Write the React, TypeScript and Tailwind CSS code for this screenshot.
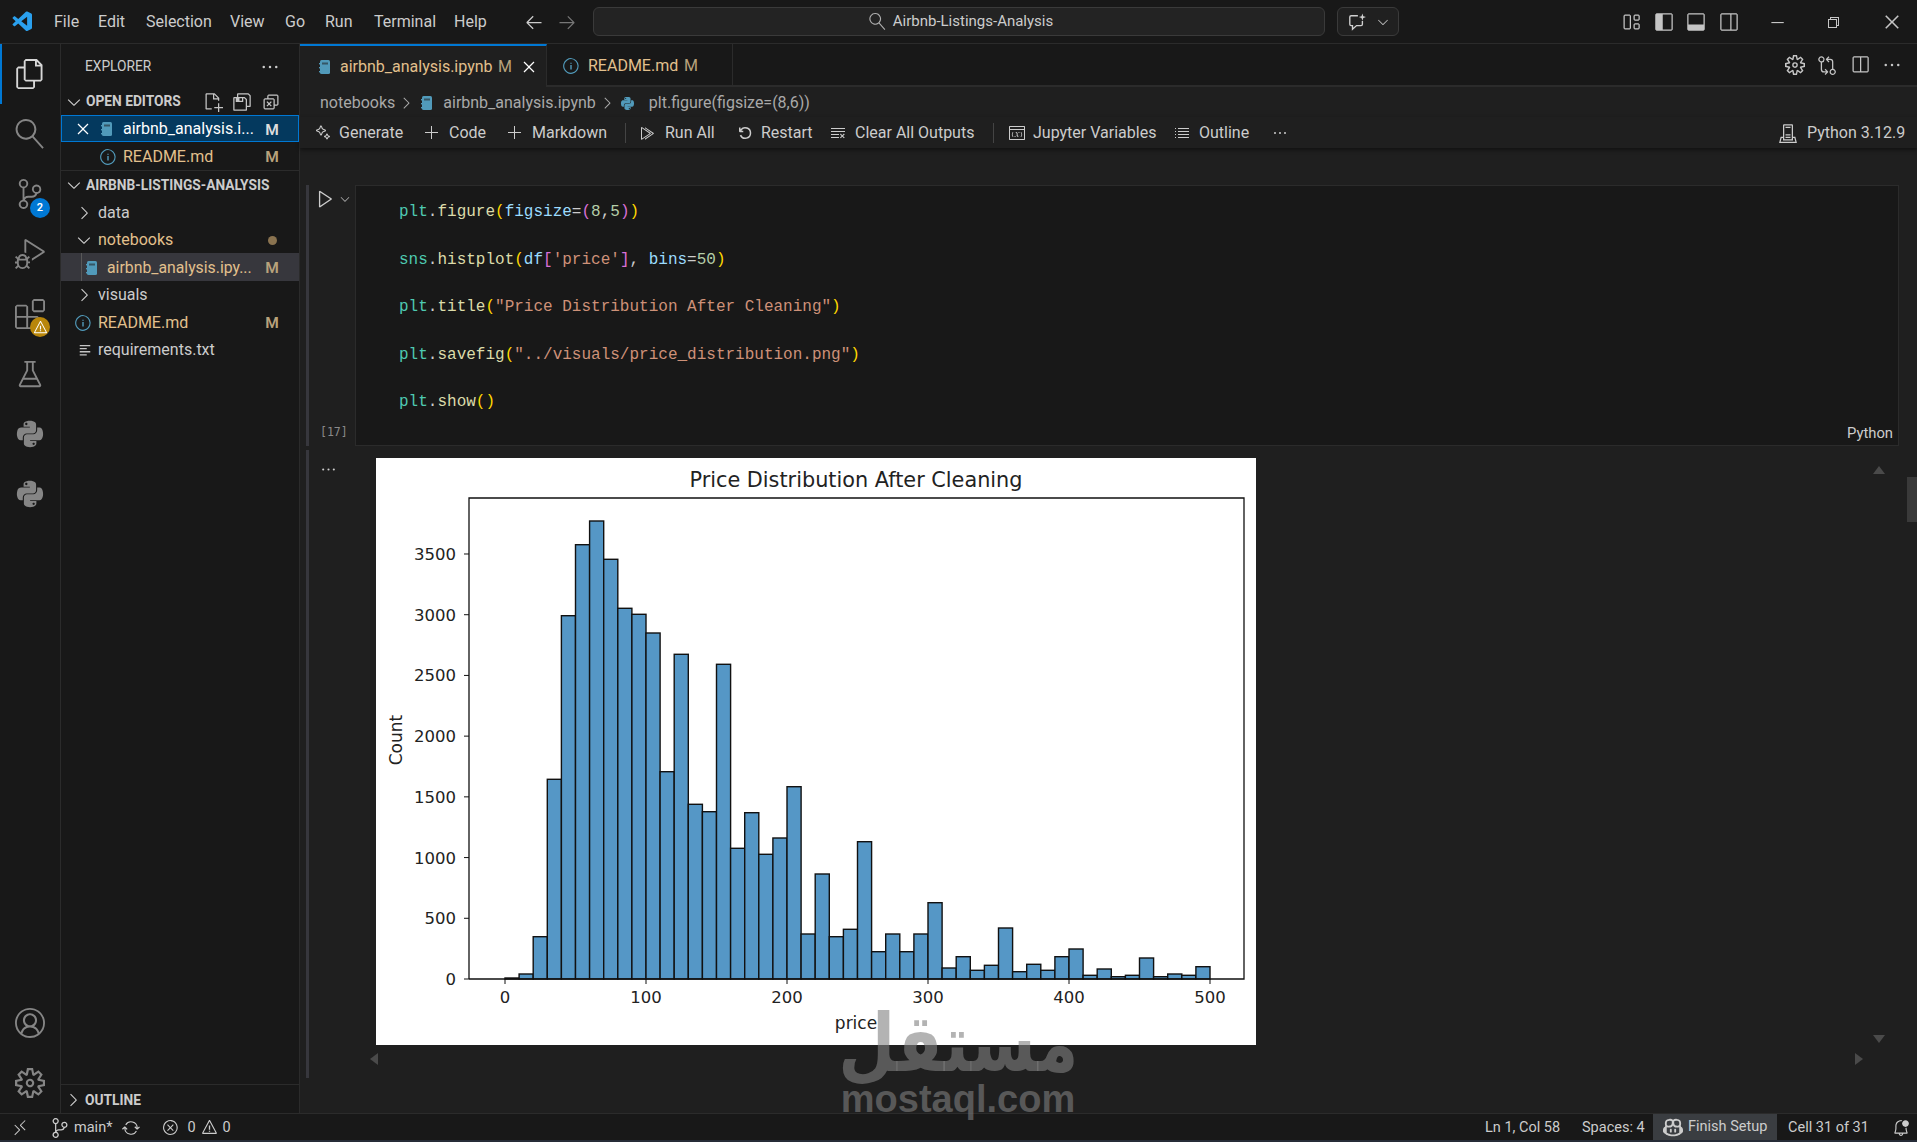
import React from "react";
import {
  VscVscode, VscArrowLeft, VscArrowRight, VscSearch, VscChevronDown, VscChevronRight, VscLayout, VscLayoutSidebarLeft,
  VscLayoutPanel, VscLayoutSidebarRightOff, VscChromeMinimize, VscChromeRestore, VscChromeClose, VscFiles, VscSourceControl,
  VscDebugAlt, VscExtensions, VscBeaker, VscAccount, VscSettingsGear, VscEllipsis, VscNewFile, VscSaveAll, VscCloseAll, VscClose,
  VscInfo, VscAdd, VscRunAll, VscDebugRestart, VscClearAll, VscVariableGroup, VscListUnordered, VscServerEnvironment,
  VscSplitHorizontal, VscPlay, VscRemote, VscSync, VscError, VscWarning, VscBellDot, VscSparkle, VscCopilot,
  VscGitCompare,
} from "react-icons/vsc";
import { FaPython } from "react-icons/fa";

const Nb = ({ className = "" }: { className?: string }) => (
  <svg viewBox="0 0 16 16" width="16" height="16" className={className}>
    <rect x="3" y="1" width="10" height="14" rx="1.5" fill="#519aba" />
    <rect x="5" y="3.5" width="6" height="2" fill="#1f1f1f" opacity="0.55" />
    <rect x="2" y="4" width="1.4" height="1.4" fill="#519aba" />
    <rect x="2" y="8" width="1.4" height="1.4" fill="#519aba" />
    <rect x="2" y="12" width="1.4" height="1.4" fill="#519aba" />
  </svg>
);

const ChatSpark = () => (
  <svg viewBox="0 0 24 24" width="24" height="24" fill="none" stroke="#d0d0d0" strokeWidth="1.5">
    <path d="M13 5H5.5A1.5 1.5 0 0 0 4 6.5v8A1.5 1.5 0 0 0 5.5 16H7v4l4.5-4h5a1.5 1.5 0 0 0 1.5-1.5V11" />
    <path d="M18 2.5l1 3 3 1-3 1-1 3-1-3-3-1 3-1z" fill="#d0d0d0" stroke="none" />
  </svg>
);

const Activity = ({ children, active }: { children: React.ReactNode; active?: boolean }) => (
  <div className={`relative h-[60px] w-[60px] flex items-center justify-center ${active ? "text-[#d7d7d7]" : "text-[#858585]"}`}>
    {active && <div className="absolute left-0 top-0 h-full w-[2px] bg-[#0078d4]" />}
    {children}
  </div>
);

const Row = ({ className = "", children }: { className?: string; children: React.ReactNode }) => (
  <div className={`relative h-[27.5px] pt-[2px] flex items-center whitespace-nowrap ${className}`}>{children}</div>
);

const M = ({ className = "text-[#b8a27c]" }: { className?: string }) => (
  <span className={`absolute left-[203px] top-[4px] w-[16px] text-center text-[15.5px] font-semibold ${className}`}>M</span>
);

// bar tops read from the reference, in page pixels
const barTops = [
  978, 974, 936.7, 779.3, 615.7, 544.7, 521, 559.3, 608.3, 614.3, 633, 771.7, 654.3, 804.3, 811.7, 664.3, 848.3, 812.7, 854.3, 838,
  786.7, 934, 874, 936.7, 929.3, 841.7, 951.7, 934, 951.7, 934, 902.7, 968, 956.7, 970.3, 965.3, 928, 971.7, 964.3, 970.3, 956.7,
  949, 975.3, 969, 976.7, 975.3, 958, 976.7, 974, 975.3, 966.7,
];

const Chart = () => {
  const x0 = 129;
  const base = 521;
  return (
    <svg width="880" height="587" viewBox="0 0 880 587" className="block bg-white" style={{ fontFamily: '"DejaVu Sans", sans-serif' }}>
      {barTops.map((t, i) => (
        <rect key={i} x={x0 + i * 14.1} y={t - 458} width={14.1} height={base - (t - 458)} fill="#5597c6" stroke="#111" strokeWidth="1.4" />
      ))}
      <path d="M93 521V40H868V521H93" fill="none" stroke="#111" strokeWidth="1.3" />
      {[0, 500, 1000, 1500, 2000, 2500, 3000, 3500].map((v) => {
        const y = base - v * 0.12143;
        return (
          <g key={v}>
            <line x1="88" x2="93" y1={y} y2={y} stroke="#111" strokeWidth="1" />
            <text x="80" y={y + 6} fontSize="16.5" textAnchor="end" fill="#222">{v}</text>
          </g>
        );
      })}
      {[0, 100, 200, 300, 400, 500].map((v) => {
        const x = x0 + v * 1.41;
        return (
          <g key={v}>
            <line x1={x} x2={x} y1="521" y2="526" stroke="#111" strokeWidth="1" />
            <text x={x} y="545" fontSize="16.5" textAnchor="middle" fill="#222">{v}</text>
          </g>
        );
      })}
      <text x="480" y="29" fontSize="20.8" textAnchor="middle" fill="#222">Price Distribution After Cleaning</text>
      <text x="480" y="571" fontSize="17" textAnchor="middle" fill="#222">price</text>
      <text x="26" y="282" fontSize="17" textAnchor="middle" fill="#222" transform="rotate(-90 26 282)">Count</text>
    </svg>
  );
};

const Tool = ({ icon, label, iconCls, textCls }: { icon: React.ReactNode; label: string; iconCls: string; textCls: string }) => (
  <>
    <span className={`flex w-[16px] justify-center ${iconCls}`}>{icon}</span>
    <span className={`whitespace-nowrap ${textCls}`}>{label}</span>
  </>
);

const c = {
  t: "text-[#4ec9b0]",
  d: "text-[#cccccc]",
  f: "text-[#dcdcaa]",
  y: "text-[#ffd700]",
  v: "text-[#9cdcfe]",
  p: "text-[#da70d6]",
  n: "text-[#b5cea8]",
  s: "text-[#ce9178]",
};

const S = ({ k, children }: { k: keyof typeof c; children: React.ReactNode }) => <span className={c[k]}>{children}</span>;

const Line = ({ children }: { children: React.ReactNode }) => <div className="h-[47.5px] leading-[47.5px] whitespace-pre">{children}</div>;

export default function App() {
  return (
    <div
      className="relative w-[1917px] h-[1142px] overflow-hidden bg-[#181818] text-[#cccccc] flex flex-col"
      style={{ fontFamily: 'Roboto, "Noto Sans", sans-serif' }}
    >
      {/* Title bar */}
      <header className="h-[44px] shrink-0 border-b border-[#2b2b2b] flex items-center text-[16px]">
        <VscVscode size={24} className="ml-[11px] text-[#2aa0ee]" />
        <nav className="flex items-center">
          <span className="ml-[19px] w-[24px]">File</span>
          <span className="ml-[20px] w-[27px]">Edit</span>
          <span className="ml-[21px] w-[64px]">Selection</span>
          <span className="ml-[20px] w-[35px]">View</span>
          <span className="ml-[20px] w-[20px]">Go</span>
          <span className="ml-[20px] w-[29px]">Run</span>
          <span className="ml-[20px] w-[60px]">Terminal</span>
          <span className="ml-[20px] w-[33px]">Help</span>
        </nav>
        <VscArrowLeft size={20} className="ml-[37px] text-[#cccccc]" />
        <VscArrowRight size={20} className="ml-[13px] text-[#777777]" />
        <div className="ml-[16px] w-[732px] h-[29px] pl-[4px] rounded-[6px] border border-[#3a3a3a] bg-[#232323] flex items-center justify-center gap-[7px]">
          <VscSearch size={17} className="text-[#b0b0b0] -scale-x-100" />
          <span className="text-[#cccccc] text-[15px]">Airbnb-Listings-Analysis</span>
        </div>
        <div className="ml-[12px] w-[62px] h-[29px] rounded-[6px] border border-[#3a3a3a] bg-[#202020] flex items-center pl-[7px] gap-[6px]">
          <span className="scale-90 flex"><ChatSpark /></span>
          <VscChevronDown size={16} className="text-[#bbbbbb]" />
        </div>
        <div className="ml-auto flex items-center text-[#c5c5c5]">
          <span className="w-[32px] flex justify-center"><VscLayout size={20} /></span>
          <span className="w-[33px] flex justify-center"><VscLayoutSidebarLeft size={20} /></span>
          <span className="w-[32px] flex justify-center"><VscLayoutPanel size={20} /></span>
          <span className="w-[33px] flex justify-center"><VscLayoutSidebarRightOff size={20} /></span>
          <span className="ml-[10px] w-[56px] pr-[12px] flex justify-center"><VscChromeMinimize size={18} /></span>
          <span className="w-[56px] pr-[12px] flex justify-center"><VscChromeRestore size={16} /></span>
          <span className="w-[50px] flex justify-center"><VscChromeClose size={20} /></span>
        </div>
      </header>

      <div className="flex h-[1069px] shrink-0">
        {/* Activity bar */}
        <aside className="w-[61px] shrink-0 border-r border-[#2b2b2b] flex flex-col">
          <Activity active><VscFiles size={30} /></Activity>
          <Activity><VscSearch size={30} className="-scale-x-100" /></Activity>
          <Activity>
            <VscSourceControl size={30} />
            <span className="absolute left-[30px] top-[34px] h-[20px] w-[20px] rounded-full bg-[#0078d4] text-white text-[11px] font-semibold flex items-center justify-center">2</span>
          </Activity>
          <Activity><VscDebugAlt size={30} /></Activity>
          <Activity>
            <VscExtensions size={30} />
            <span className="absolute left-[30px] top-[33px] h-[20px] w-[20px] rounded-full bg-[#b8860b] flex items-center justify-center text-white"><VscWarning size={15} /></span>
          </Activity>
          <Activity><VscBeaker size={30} /></Activity>
          <Activity><FaPython size={30} /></Activity>
          <Activity><FaPython size={30} /></Activity>
          <div className="mt-auto" />
          <Activity><VscAccount size={30} /></Activity>
          <Activity><VscSettingsGear size={30} /></Activity>
        </aside>

        {/* Sidebar */}
        <aside className="w-[239px] shrink-0 border-r border-[#2b2b2b] flex flex-col text-[16px]">
          <div className="h-[43px] pt-[2px] shrink-0 flex items-center pl-[24px] pr-[19px] text-[13.75px]">
            <span>EXPLORER</span>
            <VscEllipsis size={20} className="ml-auto" />
          </div>
          <Row className="font-bold text-[13.75px] pl-[3px]">
            <VscChevronDown size={20} />
            <span className="ml-[2px]">OPEN EDITORS</span>
            <span className="absolute left-[142px] flex items-center gap-[9px] text-[#c5c5c5]">
              <VscNewFile size={20} /><VscSaveAll size={20} /><VscCloseAll size={20} />
            </span>
          </Row>
          <Row className="bg-[#04395e] outline outline-1 -outline-offset-1 outline-[#0078d4] text-white">
            <VscClose size={20} className="absolute left-[12px]" />
            <Nb className="absolute left-[38px]" />
            <span className="absolute left-[62px]">airbnb_analysis.i...</span>
            <M className="text-[#dddddd]" />
          </Row>
          <Row className="text-[#e2c08d]">
            <VscInfo size={18} className="absolute left-[38px] text-[#519aba]" />
            <span className="absolute left-[62px]">README.md</span>
            <M />
          </Row>
          <div className="h-px bg-[#2b2b2b]" />
          <Row className="font-bold text-[13.75px] pl-[3px]">
            <VscChevronDown size={20} />
            <span className="ml-[2px]">AIRBNB-LISTINGS-ANALYSIS</span>
          </Row>
          <Row>
            <VscChevronRight size={20} className="absolute left-[13px]" />
            <span className="absolute left-[37px]">data</span>
          </Row>
          <Row className="text-[#e2c08d]">
            <VscChevronDown size={20} className="absolute left-[13px] text-[#cccccc]" />
            <span className="absolute left-[37px]">notebooks</span>
            <span className="absolute left-[207px] top-[10px] h-[9px] w-[9px] rounded-full bg-[#8a7350]" />
          </Row>
          <Row className="bg-[#37373d] text-[#e2c08d]">
            <div className="absolute left-[20px] top-0 h-full w-px bg-[#585858]" />
            <Nb className="absolute left-[23px]" />
            <span className="absolute left-[46px] text-[15.8px]">airbnb_analysis.ipy...</span>
            <M />
          </Row>
          <Row>
            <VscChevronRight size={20} className="absolute left-[13px]" />
            <span className="absolute left-[37px]">visuals</span>
          </Row>
          <Row className="text-[#e2c08d]">
            <VscInfo size={18} className="absolute left-[13px] text-[#519aba]" />
            <span className="absolute left-[37px]">README.md</span>
            <M />
          </Row>
          <Row>
            <svg viewBox="0 0 16 16" width="14" height="14" className="absolute left-[17px]" stroke="#c5c5c5" strokeWidth="1.5">
              <path d="M2 3h12M2 6.5h8M2 10h12M2 13.5h8" />
            </svg>
            <span className="absolute left-[37px]">requirements.txt</span>
          </Row>
          <div className="mt-auto h-[29px] pt-[2px] shrink-0 border-t border-[#2b2b2b] flex items-center pl-[2px] text-[13.75px] font-bold">
            <VscChevronRight size={20} />
            <span className="ml-[2px]">OUTLINE</span>
          </div>
        </aside>

        {/* Editor */}
        <main className="flex-1 min-w-0 flex flex-col bg-[#1f1f1f]">
          <div className="h-[43px] shrink-0 bg-[#181818] border-b-[2px] border-[#2b2b2b] flex items-stretch text-[16px]">
            <div className="w-[247px] -mb-[2px] bg-[#1f1f1f] border-t-[2px] border-t-[#0078d4] border-r border-r-[#2b2b2b] relative flex items-center text-[#e2c08d]">
              <Nb className="absolute left-[17px]" />
              <span className="absolute left-[40px]">airbnb_analysis.ipynb</span>
              <span className="absolute left-[198px] text-[#b8a27c]">M</span>
              <VscClose size={20} className="absolute left-[219px] text-white" />
            </div>
            <div className="w-[186px] pt-[2px] border-r border-[#2b2b2b] relative flex items-center text-[#e2c08d]">
              <VscInfo size={18} className="absolute left-[15px] text-[#519aba]" />
              <span className="absolute left-[41px]">README.md</span>
              <span className="absolute left-[137px] text-[#b8a27c]">M</span>
            </div>
            <div className="ml-auto flex items-center pr-[15px] gap-[12.5px] text-[#c5c5c5]">
              <VscSettingsGear size={20} /><VscGitCompare size={20} /><VscSplitHorizontal size={20} /><VscEllipsis size={20} />
            </div>
          </div>

          <div className="h-[30px] pt-[2px] shrink-0 flex items-center pl-[20px] text-[16px] text-[#a9a9a9] whitespace-nowrap">
            <span>notebooks</span>
            <VscChevronRight size={18} className="ml-[2px]" />
            <Nb className="ml-[4px]" />
            <span className="ml-[8px]">airbnb_analysis.ipynb</span>
            <VscChevronRight size={18} className="ml-[2px]" />
            <FaPython size={15} className="ml-[4px] text-[#519aba]" />
            <span className="ml-[14px]">plt.figure(figsize=(8,6))</span>
          </div>

          <div className="h-[31px] shrink-0 flex items-center text-[16px] text-[#cccccc] shadow-[0_2px_4px_rgba(0,0,0,0.45)] pr-[13px]">
            <Tool icon={<VscSparkle size={17} />} label="Generate" iconCls="ml-[15px]" textCls="ml-[8px] w-[64px]" />
            <Tool icon={<VscAdd size={20} />} label="Code" iconCls="ml-[21px]" textCls="ml-[9px] w-[37px]" />
            <Tool icon={<VscAdd size={20} />} label="Markdown" iconCls="ml-[21px]" textCls="ml-[9px] w-[76px]" />
            <div className="ml-[17px] h-[20px] w-px bg-[#444444]" />
            <Tool icon={<VscRunAll size={20} />} label="Run All" iconCls="ml-[13px]" textCls="ml-[10px] w-[51px]" />
            <Tool icon={<VscDebugRestart size={18} />} label="Restart" iconCls="ml-[21px]" textCls="ml-[8px] w-[49px]" />
            <Tool icon={<VscClearAll size={20} />} label="Clear All Outputs" iconCls="ml-[20px]" textCls="ml-[9px] w-[122px]" />
            <div className="ml-[16px] h-[20px] w-px bg-[#444444]" />
            <Tool icon={<VscVariableGroup size={20} />} label="Jupyter Variables" iconCls="ml-[15px]" textCls="ml-[8px] w-[120px]" />
            <Tool icon={<VscListUnordered size={20} />} label="Outline" iconCls="ml-[21px]" textCls="ml-[9px] w-[53px]" />
            <span className="ml-[20px] flex w-[16px] justify-center"><VscEllipsis size={18} /></span>
            <VscServerEnvironment size={20} className="ml-auto" />
            <span className="ml-[9px] w-[97px] whitespace-nowrap text-right">Python 3.12.9</span>
          </div>

          {/* Notebook */}
          <div className="relative flex-1 min-h-0">
            <div className="flex h-[261px] mt-[37px] pl-[6px]">
              <div className="relative w-[49px] shrink-0">
                <div className="absolute left-0 top-0 h-full w-[3px] bg-[#37373d]" />
                <VscPlay size={21} className="absolute left-[9px] top-[3px] text-[#cccccc]" />
                <VscChevronDown size={14} className="absolute left-[32px] top-[7px] text-[#aaaaaa]" />
                <span className="absolute left-[14px] top-[239px] text-[11.5px] text-[#8a8a8a]" style={{ fontFamily: '"DejaVu Sans Mono", monospace' }}>[17]</span>
              </div>
              <div
                className="relative w-[1544px] border border-[#2b2b2b] bg-[#181818] pl-[43px] pt-[3px] text-[16px]"
                style={{ fontFamily: '"Liberation Mono", monospace' }}
              >
                <Line><S k="t">plt</S><S k="d">.</S><S k="f">figure</S><S k="y">(</S><S k="v">figsize</S><S k="d">=</S><S k="p">(</S><S k="n">8</S><S k="d">,</S><S k="n">5</S><S k="p">)</S><S k="y">)</S></Line>
                <Line><S k="t">sns</S><S k="d">.</S><S k="f">histplot</S><S k="y">(</S><S k="v">df</S><S k="p">[</S><S k="s">'price'</S><S k="p">]</S><S k="d">, </S><S k="v">bins</S><S k="d">=</S><S k="n">50</S><S k="y">)</S></Line>
                <Line><S k="t">plt</S><S k="d">.</S><S k="f">title</S><S k="y">(</S><S k="s">"Price Distribution After Cleaning"</S><S k="y">)</S></Line>
                <Line><S k="t">plt</S><S k="d">.</S><S k="f">savefig</S><S k="y">(</S><S k="s">"../visuals/price_distribution.png"</S><S k="y">)</S></Line>
                <Line><S k="t">plt</S><S k="d">.</S><S k="f">show</S><S k="y">()</S></Line>
                <span className="absolute right-[5px] bottom-[1px] text-[14.8px] text-[#cccccc]" style={{ fontFamily: "Roboto, sans-serif" }}>Python</span>
              </div>
            </div>

            <div className="flex h-[628px] mt-[4px] pl-[6px]">
              <div className="relative w-[70px] shrink-0">
                <div className="absolute left-0 top-0 h-full w-[3px] bg-[#37373d]" />
                <VscEllipsis size={17} className="absolute left-[14px] top-[11px] text-[#cccccc]" />
              </div>
              <div className="mt-[8px] h-[587px] w-[880px] shrink-0"><Chart /></div>
            </div>

            {/* scroll glyphs */}
            <div className="absolute left-[1573px] top-[318px] h-0 w-0 border-x-[6px] border-b-[8px] border-x-transparent border-b-[#4a4a4a]" />
            <div className="absolute left-[1573px] top-[887px] h-0 w-0 border-x-[6px] border-t-[8px] border-x-transparent border-t-[#4a4a4a]" />
            <div className="absolute left-[70px] top-[905px] h-0 w-0 border-y-[6px] border-r-[8px] border-y-transparent border-r-[#4a4a4a]" />
            <div className="absolute left-[1555px] top-[905px] h-0 w-0 border-y-[6px] border-l-[8px] border-y-transparent border-l-[#4a4a4a]" />
            <div className="absolute right-0 top-[329px] h-[45px] w-[10px] bg-[#3a3a3a]" />
          </div>
        </main>
      </div>

      {/* Status bar */}
      <footer className="h-[27px] pt-[1px] shrink-0 border-t border-[#2b2b2b] flex items-center text-[14.5px] text-[#cccccc] whitespace-nowrap">
        <VscRemote size={18} className="ml-[11px]" />
        <VscSourceControl size={20} className="ml-[21px]" />
        <span className="ml-[4px]">main*</span>
        <VscSync size={18} className="ml-[10px]" />
        <VscError size={17} className="ml-[22px]" />
        <span className="ml-[8px]">0</span>
        <VscWarning size={17} className="ml-[5px]" />
        <span className="ml-[5px]">0</span>
        <span className="ml-auto w-[77px]">Ln 1, Col 58</span>
        <span className="ml-[20px] w-[61px]">Spaces: 4</span>
        <span className="ml-[10px] -mt-[1px] h-[27px] w-[124px] bg-[#3a3d41] flex items-center pl-[10px] gap-[5px]"><VscCopilot size={20} />Finish Setup</span>
        <span className="ml-[11px] w-[81px]">Cell 31 of 31</span>
        <VscBellDot size={18} className="ml-[23px] mr-[7px]" />
      </footer>
      <div className="h-[2px] shrink-0 bg-[#262c38]" />

      {/* Watermark */}
      <div className="absolute left-[843px] top-[1008px] w-[230px] flex flex-col items-center text-[rgba(128,128,128,0.6)] pointer-events-none">
        <span className="text-[80px] leading-[72px] font-bold scale-x-[0.82]" style={{ fontFamily: '"DejaVu Sans", sans-serif' }} dir="rtl">مستقل</span>
        <span className="text-[38px] leading-[38px] font-bold" style={{ fontFamily: '"Liberation Sans", sans-serif' }}>mostaql.com</span>
      </div>
    </div>
  );
}
